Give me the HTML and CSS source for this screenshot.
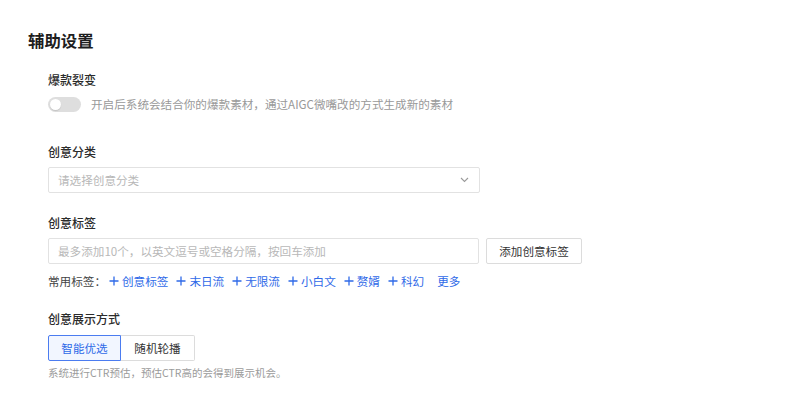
FILE: index.html
```html
<!DOCTYPE html>
<html lang="zh-CN">
<head>
<meta charset="utf-8">
<title>辅助设置</title>
<link rel="stylesheet" href="styles.css">
</head>
<body>
<div class="page">
  <h1 class="title">辅助设置</h1>
  <div class="form">
    <div class="field field-viral">
      <div class="label">爆款裂变</div>
      <div class="switch-row">
        <span class="switch"><span class="knob"></span></span>
        <span class="desc">开启后系统会结合你的爆款素材，通过AIGC微嘴改的方式生成新的素材</span>
      </div>
    </div>

    <div class="field field-category">
      <div class="label">创意分类</div>
      <div class="select">
        <span class="placeholder">请选择创意分类</span>
        <svg class="chevron" width="9" height="6" viewBox="0 0 9 6"><path d="M1 1 L4.5 4.5 L8 1" fill="none" stroke="#9a9a9a" stroke-width="1.1"/></svg>
      </div>
    </div>

    <div class="field field-tags">
      <div class="label">创意标签</div>
      <div class="tag-input-row">
        <div class="input"><span class="placeholder">最多添加10个，以英文逗号或空格分隔，按回车添加</span></div>
        <button class="btn">添加创意标签</button>
      </div>
      <div class="common-tags">
        <span class="common-label">常用标签：</span>
        <span class="tag"><svg class="plus" width="10" height="10" viewBox="0 0 10 10"><path d="M5 0.5 V9.5 M0.5 5 H9.5" stroke="#2f6ae8" stroke-width="1.3"/></svg>创意标签</span>
        <span class="tag"><svg class="plus" width="10" height="10" viewBox="0 0 10 10"><path d="M5 0.5 V9.5 M0.5 5 H9.5" stroke="#2f6ae8" stroke-width="1.3"/></svg>末日流</span>
        <span class="tag"><svg class="plus" width="10" height="10" viewBox="0 0 10 10"><path d="M5 0.5 V9.5 M0.5 5 H9.5" stroke="#2f6ae8" stroke-width="1.3"/></svg>无限流</span>
        <span class="tag"><svg class="plus" width="10" height="10" viewBox="0 0 10 10"><path d="M5 0.5 V9.5 M0.5 5 H9.5" stroke="#2f6ae8" stroke-width="1.3"/></svg>小白文</span>
        <span class="tag"><svg class="plus" width="10" height="10" viewBox="0 0 10 10"><path d="M5 0.5 V9.5 M0.5 5 H9.5" stroke="#2f6ae8" stroke-width="1.3"/></svg>赘婿</span>
        <span class="tag"><svg class="plus" width="10" height="10" viewBox="0 0 10 10"><path d="M5 0.5 V9.5 M0.5 5 H9.5" stroke="#2f6ae8" stroke-width="1.3"/></svg>科幻</span>
        <span class="tag more">更多</span>
      </div>
    </div>

    <div class="field field-display">
      <div class="label">创意展示方式</div>
      <div class="segmented">
        <button class="seg seg-active">智能优选</button>
        <button class="seg">随机轮播</button>
      </div>
      <div class="caption">系统进行CTR预估，预估CTR高的会得到展示机会。</div>
    </div>
  </div>
</div>
</body>
</html>
```

FILE: styles.css
```css
* { box-sizing: border-box; }

html, body {
  margin: 0;
  padding: 0;
  background: #ffffff;
}

body {
  font-family: "Noto Sans CJK SC", "Noto Sans", sans-serif;
  font-size: 11.6px;
  color: #333333;
}

.page {
  padding: 28px 0 0 28px;
}

.title {
  margin: 0;
  font-size: 16.4px;
  line-height: 24px;
  font-weight: 600;
  color: #1d1d1d;
}

.form {
  padding-left: 20px;
}

.label {
  font-size: 12px;
  line-height: 18px;
  font-weight: 500;
  color: #2b2b2b;
}

.field-viral { margin-top: 19px; }
.field-category { margin-top: 31px; }
.field-tags { margin-top: 21px; }
.field-display { margin-top: 20px; }

.switch-row {
  margin-top: 7px;
  display: flex;
  align-items: center;
  height: 16px;
}

.switch {
  position: relative;
  width: 33px;
  height: 15px;
  border-radius: 8px;
  background: #dedede;
  flex: none;
}

.knob {
  position: absolute;
  left: 2px;
  top: 2px;
  width: 11px;
  height: 11px;
  border-radius: 50%;
  background: #ffffff;
  box-shadow: 0 1px 1px rgba(0, 0, 0, 0.12);
}

.desc {
  margin-left: 10px;
  color: #999999;
  line-height: 16px;
}

.select {
  margin-top: 6px;
  width: 432px;
  height: 26px;
  border: 1px solid #e2e2e2;
  border-radius: 2px;
  display: flex;
  align-items: center;
  justify-content: space-between;
  padding: 0 10px 0 9px;
}

.placeholder {
  color: #b8b8b8;
  line-height: 16px;
}

.tag-input-row {
  margin-top: 6px;
  display: flex;
  gap: 7px;
}

.input {
  width: 431px;
  height: 26px;
  border: 1px solid #e2e2e2;
  border-radius: 2px;
  display: flex;
  align-items: center;
  padding: 0 9px;
}

.btn {
  width: 96px;
  height: 26px;
  border: 1px solid #dcdcdc;
  border-radius: 2px;
  background: #ffffff;
  font-family: inherit;
  font-size: 11.6px;
  color: #333333;
  padding: 0;
}

.common-tags {
  margin-top: 8px;
  display: flex;
  align-items: center;
  height: 18px;
  line-height: 18px;
}

.common-label {
  color: #444444;
  margin-right: 3px;
}

.tag {
  display: inline-flex;
  align-items: center;
  color: #2f6ae8;
  margin-right: 8px;
}

.plus {
  margin-right: 3px;
  flex: none;
}

.tag.more {
  margin-left: 5px;
}

.segmented {
  margin-top: 7px;
  display: flex;
}

.seg {
  height: 26px;
  width: 73px;
  padding: 0;
  border: 1px solid #dcdcdc;
  background: #ffffff;
  font-family: inherit;
  font-size: 11.6px;
  color: #333333;
}

.seg + .seg {
  border-left: none;
  width: 74px;
  border-radius: 0 2px 2px 0;
}

.seg-active {
  border-color: #4b7cf0;
  background: #f2f6ff;
  color: #2f6ae8;
  border-radius: 2px 0 0 2px;
}

.caption {
  margin-top: 4px;
  line-height: 16px;
  color: #9b9b9b;
  font-size: 10.5px;
}
```
